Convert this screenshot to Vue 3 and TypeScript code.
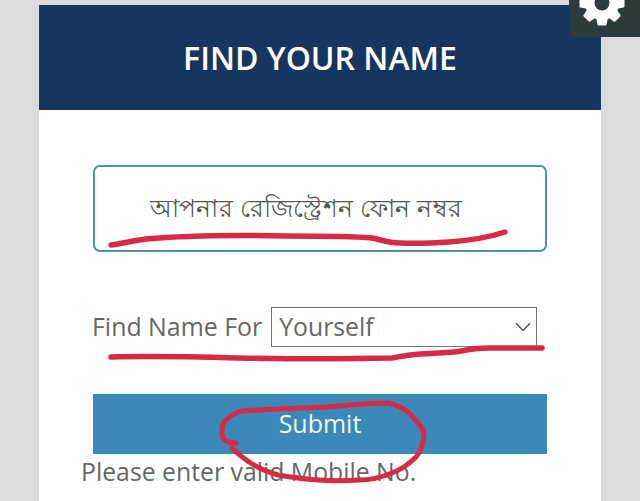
<script setup lang="ts">
const teeth: number[] = [0, 45, 90, 135, 180, 225, 270, 315]
</script>

<template>
  <div class="page">
    <main class="card">
      <h1 class="title">FIND YOUR NAME</h1>
      <div class="body">
        <div class="phone">আপনার রেজিস্ট্রেশন ফোন নম্বর</div>
        <div class="for-row">
          <label class="for-label" for="who">Find Name For</label>
          <div class="select-wrap">
            <select id="who" class="select">
              <option>Yourself</option>
            </select>
            <svg class="chevron" viewBox="0 0 16 10" width="16" height="10">
              <path d="M1 1.2 8 8.4 15 1.2" fill="none" stroke="#555" stroke-width="1.5" />
            </svg>
          </div>
        </div>
        <button class="submit" type="button">Submit</button>
        <p class="message">Please enter valid Mobile No.</p>
      </div>
    </main>

    <div class="settings">
      <svg class="gear" viewBox="-25 -25 50 50" width="50" height="50">
        <path
          v-for="a in teeth"
          :key="a"
          d="M-6 -14 L-4.6 -21.5 Q-4.4 -22.5 -3.4 -22.5 L3.4 -22.5 Q4.4 -22.5 4.6 -21.5 L6 -14 Z"
          fill="#fff"
          :transform="`rotate(${a})`"
        />
        <circle r="17" fill="#fff" />
        <circle r="7.5" fill="#2f3a3c" />
      </svg>
    </div>

    <svg class="ink" viewBox="0 0 640 501" width="640" height="501">
      <g fill="none" stroke="#d72a45" stroke-linecap="round" stroke-linejoin="round">
        <path stroke-width="5.5" d="M111 245C120 244 130 241 146 239C190 235 240 235 286 236C320 236 350 236 372 238C382 240 388 243 400 243C420 244 435 243 449 242C475 240 490 237 505 232" />
        <path stroke-width="5.5" d="M111 357C150 356 200 357 237 358C290 359 350 359 392 358C402 356 410 355 420 354C435 353 450 353 461 351C470 349 478 348 490 348C510 348 530 348 542 348" />
        <path stroke-width="5" d="M236 443C228 443 222 440 222 434C222 427 222 424 225 421C230 416 235 413 241 411C270 409 300 408 327 407C350 405 370 403 388 403C397 405 403 408 408 412C416 420 422 426 424 433C424 445 420 452 416 457C408 465 400 470 392 473C380 478 370 480 359 480C345 481 332 481 318 480C304 479 290 477 278 475C268 472 258 468 249 462C242 457 236 452 232 448" />
      </g>
    </svg>
  </div>
</template>

<style scoped>
.page {
  position: relative;
  width: 640px;
  height: 501px;
  overflow: hidden;
  background: #d9dbdd;
  padding: 5px 39px 0;
  box-sizing: border-box;
  font-family: "Open Sans", "Noto Sans", sans-serif;
  color: #666;
}
.card {
  background: #fff;
  height: 100%;
}
.title {
  margin: 0;
  height: 105px;
  display: flex;
  align-items: center;
  justify-content: center;
  background: #17365f;
  color: #fff;
  font-size: 32px;
  font-weight: 600;
}
.body {
  padding: 55px 54px 0;
}
.phone {
  height: 87px;
  box-sizing: border-box;
  padding: 3px 28px 0 0;
  display: flex;
  align-items: center;
  justify-content: center;
  border: 2px solid #4c92ad;
  border-radius: 7px;
  font-size: 25.2px;
  letter-spacing: 0.3px;
  color: #555;
}
.for-row {
  margin-top: 55px;
  display: flex;
  align-items: center;
  gap: 8px;
  width: 444px;
}
.for-label {
  font-size: 24.9px;
  white-space: nowrap;
  position: relative;
  top: -1px;
  left: -1px;
}
.select-wrap {
  position: relative;
  flex: 1;
}
.select {
  display: block;
  width: 100%;
  height: 40px;
  box-sizing: border-box;
  padding: 0 0 2px 7px;
  appearance: none;
  border: 1.5px solid #777;
  border-radius: 0;
  background: #fff;
  font: inherit;
  font-size: 24.8px;
  color: #666;
}
.chevron {
  position: absolute;
  right: 6px;
  top: 15px;
}
.submit {
  display: block;
  width: 100%;
  height: 60px;
  margin-top: 47px;
  padding: 0 0 2px;
  border: 0;
  background: #3b89bb;
  color: #eef7fb;
  font: inherit;
  font-size: 25px;
}
.message {
  margin: -1px 0 0 -12px;
  font-size: 24.8px;
  line-height: 36px;
}
.settings {
  position: absolute;
  top: 0;
  right: 0;
  width: 71px;
  height: 37px;
  background: #2f3a3c;
  border-bottom-left-radius: 7px;
}
.gear {
  position: absolute;
  left: 8px;
  top: -22px;
}
.ink {
  position: absolute;
  left: 0;
  top: 0;
  pointer-events: none;
}
</style>
